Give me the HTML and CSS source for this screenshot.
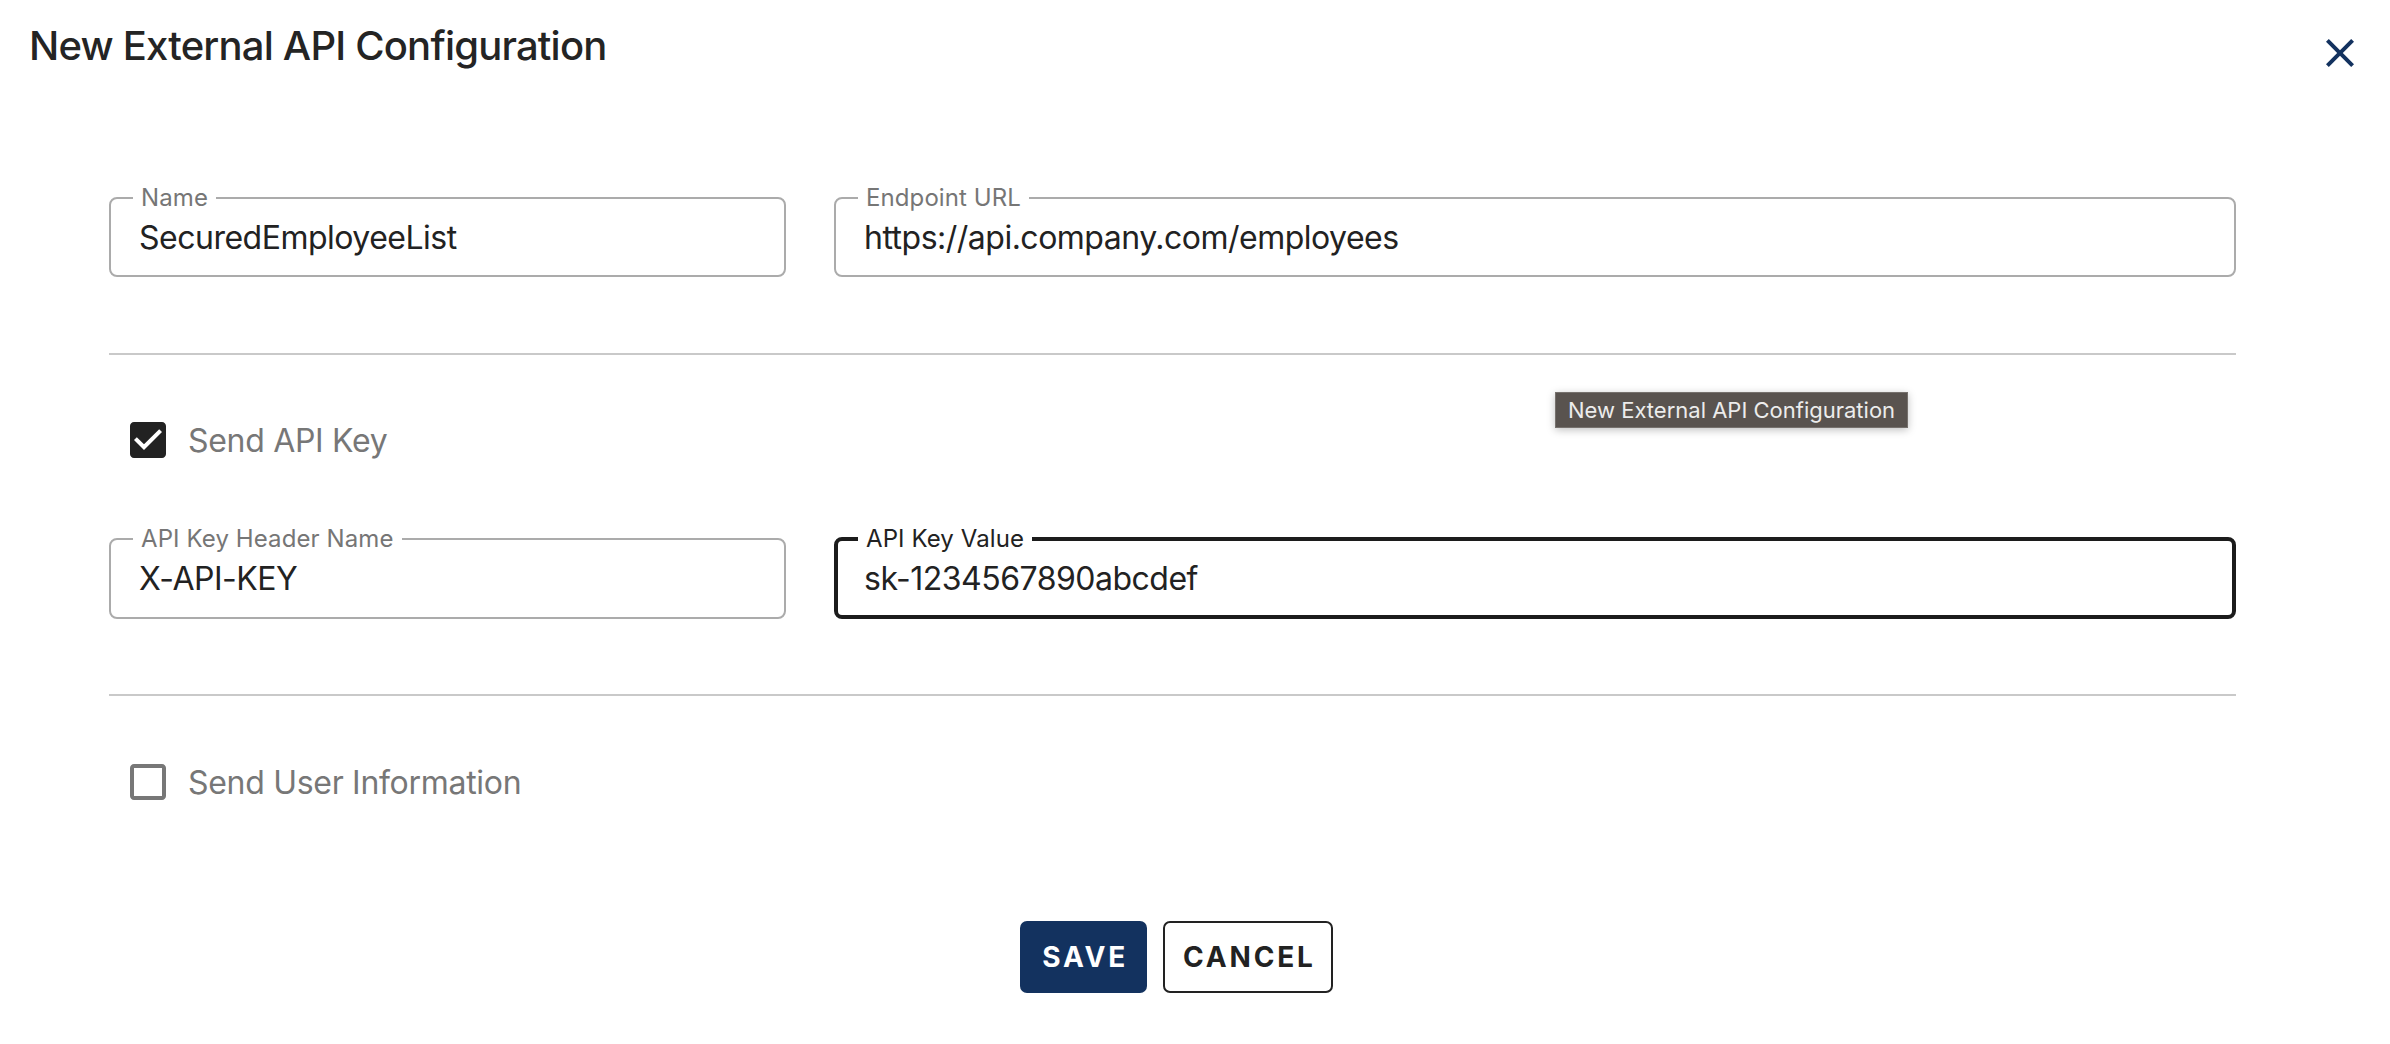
FILE: index.html
```html
<!DOCTYPE html>
<html lang="en">
<head>
<meta charset="utf-8">
<title>New External API Configuration</title>
<link rel="stylesheet" href="styles.css">
</head>
<body>
<div class="dialog">
  <header class="dialog-header">
    <h2 class="dialog-title">New External API Configuration</h2>
    <button class="close-btn" aria-label="Close">
      <svg viewBox="0 0 24 24" width="48" height="48"><path d="M19 6.41 17.59 5 12 10.59 6.41 5 5 6.41 10.59 12 5 17.59 6.41 19 12 13.41 17.59 19 19 17.59 13.41 12z"/></svg>
    </button>
  </header>
  <div class="dialog-content">
    <div class="field-row">
      <fieldset class="field">
        <legend>Name</legend>
        <input type="text" value="SecuredEmployeeList">
      </fieldset>
      <fieldset class="field">
        <legend>Endpoint URL</legend>
        <input type="text" value="https://api.company.com/employees">
      </fieldset>
    </div>
    <hr class="divider">
    <label class="check-row">
      <svg class="check checked" viewBox="0 0 24 24" width="48" height="48"><path d="M19 3H5c-1.11 0-2 .9-2 2v14c0 1.1.89 2 2 2h14c1.11 0 2-.9 2-2V5c0-1.1-.89-2-2-2zm-9 14l-5-5 1.41-1.41L10 14.170l7.59-7.59L19 8l-9 9z"/></svg>
      <span class="check-label">Send API Key</span>
    </label>
    <div class="field-row second">
      <fieldset class="field">
        <legend>API Key Header Name</legend>
        <input type="text" value="X-API-KEY">
      </fieldset>
      <fieldset class="field focused">
        <legend>API Key Value</legend>
        <input type="text" value="sk-1234567890abcdef">
      </fieldset>
    </div>
    <hr class="divider second">
    <label class="check-row">
      <svg class="check" viewBox="0 0 24 24" width="48" height="48"><path d="M19 5v14H5V5h14m0-2H5c-1.1 0-2 .9-2 2v14c0 1.1.9 2 2 2h14c1.1 0 2-.9 2-2V5c0-1.1-.9-2-2-2z"/></svg>
      <span class="check-label">Send User Information</span>
    </label>
    <div class="actions">
      <button class="btn btn-primary">SAVE</button>
      <button class="btn btn-outline">CANCEL</button>
    </div>
  </div>
  <div class="tooltip">New External API Configuration</div>
</div>
</body>
</html>
```
FILE: styles.css
```css
* { box-sizing: border-box; }
html, body {
  margin: 0;
  padding: 0;
  background: #ffffff;
}
body {
  font-family: Inter, "Noto Sans", "Liberation Sans", sans-serif;
  color: #222222;
}
.dialog {
  position: relative;
  width: 2390px;
  height: 1044px;
}
.dialog-header {
  display: flex;
  justify-content: space-between;
  align-items: flex-start;
  padding: 22px 26px 0 29px;
}
.dialog-title {
  margin: 0;
  font-size: 40px;
  line-height: 48px;
  font-weight: 500;
  color: #242424;
  letter-spacing: -0.8px;
}
.close-btn {
  margin-top: 7px;
  width: 48px;
  height: 48px;
  padding: 0;
  border: 0;
  background: none;
  display: flex;
  align-items: center;
  justify-content: center;
}
.close-btn svg { fill: #13325f; display: block; }
.dialog-content {
  padding: 0 154px 0 109px;
}
.field-row {
  display: grid;
  grid-template-columns: calc((100% + 48px) / 3 - 48px) 1fr;
  column-gap: 48px;
  margin-top: 109px;
}
.field-row.second { margin-top: 45px; }
.field {
  margin: 0;
  border: 2px solid #ababab;
  border-radius: 8px;
  padding: 0 0 11px 22px;
  min-width: 0;
}
.field legend {
  font-size: 24px;
  line-height: 24px;
  color: #767676;
  padding: 0 8px;
  letter-spacing: 0.1px;
}
.field input {
  display: block;
  width: 100%;
  height: 54px;
  border: 0;
  outline: none;
  padding: 0 0 0 6px;
  margin: 0;
  font-family: Inter, "Noto Sans", "Liberation Sans", sans-serif;
  font-size: 32px;
  letter-spacing: -0.5px;
  color: #222222;
  background: transparent;
}
.field.focused {
  border: 4px solid #1c1c1c;
  padding: 0 0 10px 20px;
}
.field.focused legend { color: #222222; }
.divider {
  margin: 76px 0 0 0;
  border: 0;
  height: 2px;
  background: #c9c9c9;
}
.divider.second { margin-top: 75px; }
.check-row {
  display: flex;
  align-items: center;
  height: 84px;
  margin-top: 43px;
}
.divider.second + .check-row { margin-top: 44px; }
.check {
  display: block;
  margin-left: 15px;
  fill: #777777;
}
.check.checked { fill: #222222; }
.check-label {
  margin-left: 16px;
  font-size: 32px;
  letter-spacing: -0.3px;
  color: #777777;
}
.actions {
  display: flex;
  justify-content: center;
  gap: 16px;
  margin-top: 97px;
  padding-left: 8px;
}
.btn {
  height: 72px;
  display: inline-flex;
  align-items: center;
  justify-content: center;
  font-family: Inter, "Noto Sans", "Liberation Sans", sans-serif;
  font-size: 28px;
  font-weight: 700;
  letter-spacing: 0.1em;
  border-radius: 7px;
  cursor: pointer;
}
.btn-primary {
  background: #13325f;
  color: #ffffff;
  border: 0;
  padding: 0 19px 0 22px;
}
.btn-outline {
  background: #ffffff;
  color: #222222;
  border: 2px solid #222222;
  padding: 0 15px 0 18px;
}
.tooltip {
  position: absolute;
  left: 1555px;
  top: 392px;
  width: 353px;
  height: 36px;
  background: #59534f;
  border: 1px solid #76716d;
  color: #ececec;
  font-size: 22px;
  line-height: 34px;
  padding-left: 12px;
  box-shadow: 0 2px 8px rgba(0, 0, 0, 0.25);
  white-space: nowrap;
}
```
